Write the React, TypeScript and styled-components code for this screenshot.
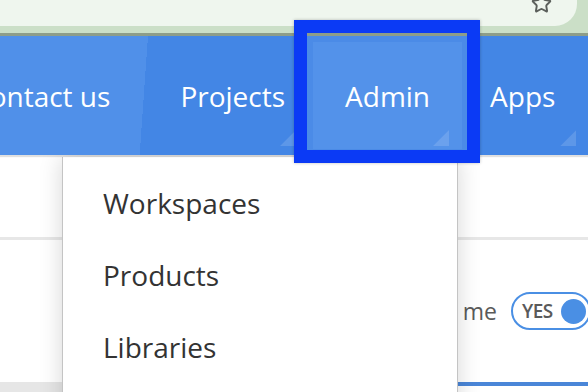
import React from 'react';
import styled, { createGlobalStyle } from 'styled-components';
import { Star } from 'lucide-react';

const GlobalStyle = createGlobalStyle`
	html, body {
		margin: 0;
		padding: 0;
		background: #ffffff;
		overflow: hidden;
	}
	body {
		font-family: "Open Sans", "Noto Sans", sans-serif;
	}
`;

const navItems = [
	{ label: 'Contact us', dropdown: false, active: false, padLeft: 30, padRight: 40 },
	{ label: 'Projects', dropdown: true, active: false, padLeft: 30, padRight: 30 },
	{ label: 'Admin', dropdown: true, active: true, padLeft: 38, padRight: 38 },
	{ label: 'Apps', dropdown: true, active: false, padLeft: 30, padRight: 40 },
];

const menuItems = ['Workspaces', 'Products', 'Libraries'];

export default function App(): React.ReactElement {
	return (
		<Window>
			<GlobalStyle />

			<Toolbar>
				<Omnibox>
					<StarButton>
						<Star size={21} strokeWidth={2.2} />
					</StarButton>
				</Omnibox>
			</Toolbar>

			<NavBar>
				<NavList>
					{navItems.map((item) => (
						<NavItem
							key={item.label}
							$dropdown={item.dropdown}
							$active={item.active}
							$padLeft={item.padLeft}
							$padRight={item.padRight}
						>
							{item.label}
							{item.active && <FocusRing />}
						</NavItem>
					))}
				</NavList>
			</NavBar>

			<Content>
				<HeaderRow />

				<SettingRow>
					<SettingLabel>Remember me</SettingLabel>
					<Toggle>
						<ToggleText>YES</ToggleText>
						<Knob />
					</Toggle>
				</SettingRow>

				<BottomBar>
					<BottomShade />
					<Underline />
				</BottomBar>

				<Menu>
					{menuItems.map((label) => (
						<MenuItem key={label}>{label}</MenuItem>
					))}
				</Menu>
			</Content>
		</Window>
	);
}

const Window = styled.div`
	width: 588px;
	height: 392px;
	overflow: hidden;
	position: relative;
`;

const Toolbar = styled.div`
	height: 33px;
	background: #cbdfc7;
	border-bottom: 3px solid #8d9d89;
`;

const Omnibox = styled.div`
	height: 26px;
	margin-right: 11px;
	background: #eff6ee;
	border-bottom-right-radius: 22px;
	display: flex;
	justify-content: flex-end;
	align-items: flex-start;
	overflow: hidden;
`;

const StarButton = styled.div`
	color: #5b5f5b;
	margin-top: -7px;
	margin-right: 25px;
	display: flex;
`;

const NavBar = styled.nav`
	height: 119px;
	background: linear-gradient(94deg, #5090e9 147.6px, #4386e5 147.6px);
	box-shadow: 0 2px 1px rgba(0, 0, 0, 0.12);
	position: relative;
	z-index: 2;
`;

const NavList = styled.ul`
	list-style: none;
	margin: 0 0 0 -58px;
	padding: 0;
	height: 100%;
	display: flex;
	white-space: nowrap;
`;

const NavItem = styled.li<{ $dropdown: boolean; $active: boolean; $padLeft: number; $padRight: number }>`
	position: relative;
	display: flex;
	align-items: center;
	padding: 0 ${(p) => p.$padRight}px 0 ${(p) => p.$padLeft}px;
	margin: ${(p) => (p.$active ? '0 -8px' : '0')};
	font-size: 28px;
	color: #ffffff;
	z-index: ${(p) => (p.$active ? 1 : 0)};
	background: ${(p) => (p.$active ? '#5392ea' : 'transparent')};
	box-shadow: ${(p) => (p.$active ? 'inset 0 0 0 6px rgba(66, 130, 228, 0.45)' : 'none')};

	&::after {
		content: '';
		display: ${(p) => (p.$dropdown ? 'block' : 'none')};
		position: absolute;
		right: 19px;
		bottom: 9px;
		width: 16px;
		height: 16px;
		background: rgba(255, 255, 255, 0.14);
		clip-path: polygon(100% 0, 100% 100%, 0 100%);
	}
`;

const FocusRing = styled.span`
	position: absolute;
	top: -16px;
	left: -13px;
	right: -12px;
	bottom: -8px;
	border: 13px solid #0b3af5;
	box-shadow: 0 0 3px rgba(0, 0, 0, 0.25);
	pointer-events: none;
`;

const Content = styled.div`
	position: relative;
	height: 237px;
`;

const HeaderRow = styled.div`
	height: 82px;
	border-bottom: 3px solid #e7e7e7;
`;

const SettingRow = styled.div`
	height: 142px;
	display: flex;
	align-items: center;
	justify-content: flex-end;
	gap: 14px;
	margin-right: -3px;
`;

const SettingLabel = styled.span`
	font-size: 23px;
	color: #5a5a5a;
`;

const Toggle = styled.div`
	width: 80px;
	height: 38px;
	box-sizing: border-box;
	border: 2px solid #4a8fe4;
	border-radius: 20px;
	display: flex;
	align-items: center;
	justify-content: space-between;
	padding: 0 3px 0 9px;
`;

const ToggleText = styled.span`
	font-size: 19px;
	font-weight: 600;
	color: #5a5a5a;
	letter-spacing: -0.5px;
`;

const Knob = styled.span`
	width: 25px;
	height: 25px;
	border-radius: 50%;
	background: #4a8fe4;
`;

const BottomBar = styled.div`
	display: flex;
	align-items: flex-start;
`;

const BottomShade = styled.div`
	width: 300px;
	height: 10px;
	background: #e6e6e6;
`;

const Underline = styled.div`
	flex: 1;
	height: 4px;
	background: #4a86d8;
`;

const Menu = styled.ul`
	position: absolute;
	top: 2px;
	left: 62px;
	width: 396px;
	height: 260px;
	margin: 0;
	padding: 10px 0 0;
	list-style: none;
	box-sizing: border-box;
	background: #ffffff;
	border-left: 1px solid #c4c4c4;
	border-right: 1px solid #c4c4c4;
	box-shadow: 0 0 22px rgba(0, 0, 0, 0.16);
	z-index: 1;
`;

const MenuItem = styled.li`
	height: 72px;
	line-height: 72px;
	padding-left: 40px;
	font-size: 28px;
	color: #333333;
`;
